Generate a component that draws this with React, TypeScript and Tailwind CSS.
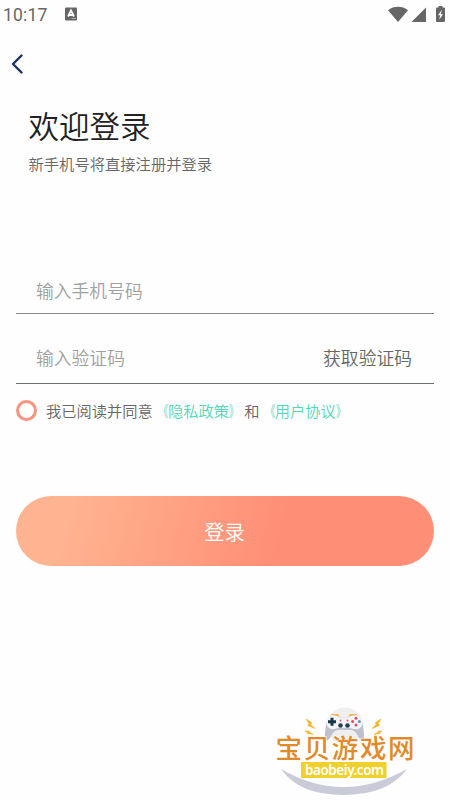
import React, { useState } from 'react';

const StatusBar: React.FC = () => (
  <div className="flex h-7 items-center justify-between pl-[3px] pr-1 text-[#666]">
    <div className="flex items-center gap-[17px]">
      <span className="w-[45px] pt-[2px] font-[Roboto] text-[17.5px] leading-6 tracking-[0.2px]">10:17</span>
      <svg width="13" height="14" viewBox="0 0 13 14">
        <rect width="12" height="13" y="0.5" rx="1" fill="#666" />
        <path d="M3 9.5 L6 3.5 L9 9.5 M4.2 8 H7.8" fill="none" stroke="#fff" strokeWidth="1.8" />
        <path d="M6.5 11.5 H11" stroke="#aaa" />
      </svg>
    </div>
    <svg width="58" height="18" viewBox="0 0 58 18" fill="#666">
      <path d="M0 5.2 C5.5 0.7 14.5 0.7 20 5.2 L10 17 Z" />
      <path d="M38 2.5 V17 H23.5 Z" />
      <path d="M50.5 1 H54.5 V2.5 H56 Q57 2.5 57 3.5 V16 Q57 17 56 17 H49 Q48 17 48 16 V3.5 Q48 2.5 49 2.5 H50.5 Z" />
      <path d="M53.8 4.8 L50 10.3 H52.2 L51.2 14.8 L55 9.2 H52.8 Z" fill="#fff" />
    </svg>
  </div>
);

const DocLink: React.FC<{ title: string }> = ({ title }) => (
  <a href="#" className="text-[#50d8b8]">
    <span className="inline-block origin-right scale-x-[0.62]">《</span>
    {title}
    <span className="inline-block origin-left scale-x-[0.62]">》</span>
  </a>
);

const SiteLogo: React.FC = () => (
  <svg width="150" height="96" viewBox="270 704 150 96">
    <circle cx="345" cy="726" r="18.5" fill="#efefef" />
    <path d="M281 769 Q343 805 407 769 Q388 795 343 795 Q299 795 281 769 Z" fill="#c9cbd9" />
    {/* gamepad */}
    <path d="M330 716.5 L332 714 H338 L340 716.5 Z M348 716.5 L350 714 H356 L358 716.5 Z" fill="#efb544" />
    <path
      d="M331 715.5 C334 714.8 338 716 340 717.5 H348 C350 716 354 714.8 358 715.5 C362 717 364.5 729 364 739 C363 742 360.5 740.5 358 736 C356 732 354 730.5 351 730 H338 C335 730.5 333 732 331 736 C329 740.5 326 742 325 739 C324.5 729 327 717 331 715.5 Z"
      fill="#bfc1cf"
    />
    <path
      d="M331 715.5 C334 714.8 338 716 340 717.5 H348 C350 716 354 714.8 358 715.5 C364 718 364 727.5 358 729 C355 730 352 728 350 728 H338 C336 728 334 730 331 729 C325 727.5 325 718 331 715.5 Z"
      fill="#f3f3f8"
    />
    <path d="M332 717.7 V725.7 M328 721.7 H336" stroke="#18384a" strokeWidth="3" />
    <circle cx="340.5" cy="725.5" r="2.3" fill="#244052" />
    <circle cx="347.5" cy="725.5" r="2.3" fill="#244052" />
    <circle cx="340.5" cy="720.5" r="1" fill="#d95c6b" />
    <circle cx="347.5" cy="720.5" r="1" fill="#d95c6b" />
    <circle cx="356" cy="718.3" r="1.5" fill="#dd4f60" />
    <circle cx="356" cy="725" r="1.5" fill="#dd4f60" />
    <circle cx="352.6" cy="721.6" r="1.5" fill="#dd4f60" />
    <circle cx="359.4" cy="721.6" r="1.5" fill="#4d9db0" />
    {/* sparks */}
    <g fill="#f1b62c" stroke="#f1b62c" strokeWidth="0.7">
      <path d="M306 719 L311.5 722.5 L310.8 724.5 L315 728.5 L307.8 725.5 L309 723.5 Z" />
      <path d="M305 731 L309.5 731.3 L309.8 732.5 L313 734.3 L307.5 733.6 L307.8 732.8 Z" />
      <path d="M381 719 L375.5 722.5 L376.2 724.5 L372 728.5 L379.5 725.5 L378.2 723.5 Z" />
      <path d="M382 731 L378 731.3 L377.8 732.5 L374 734.3 L380 733.6 L379.5 732.8 Z" />
    </g>
    <text
      x="275.5"
      y="758.3"
      textLength="139"
      fill="#e18a29"
      className="font-['Noto_Sans_CJK_SC',sans-serif] text-[26.5px] font-medium"
      stroke="#fff"
      strokeWidth="1"
      paintOrder="stroke"
    >
      宝贝游戏网
    </text>
    <rect x="301" y="762" width="85.5" height="16" fill="#efd02d" />
    <text x="305" y="774.5" textLength="79" fill="#fff" className="font-['Noto_Sans',sans-serif] text-[13.5px] font-semibold">
      baobeiy.com
    </text>
  </svg>
);

const App: React.FC = () => {
  const [agreed, setAgreed] = useState(false);

  return (
    <div className="flex h-[800px] w-[450px] flex-col overflow-hidden bg-[#fefefe] font-['Noto_Sans_CJK_SC',sans-serif]">
      <StatusBar />
      <header className="flex h-[72px] items-center pl-[11px]">
        <button type="button" aria-label="返回">
          <svg width="13" height="20" viewBox="0 0 13 20" fill="none" stroke="#153462" strokeWidth="2.4" strokeLinecap="round" strokeLinejoin="round">
            <path d="M10.5 1.5 L2 10 L10.5 18.5" />
          </svg>
        </button>
      </header>

      <div className="h-[160px] pl-[28.5px] pt-1">
        <h1 className="text-[30.5px] font-[350] leading-[42px] text-[#222]">欢迎登录</h1>
        <p className="mt-[6px] text-[15.3px] font-[350] leading-[22px] text-[#666]">新手机号将直接注册并登录</p>
      </div>

      <form className="flex flex-col pl-[15.5px] pr-[16.5px]" onSubmit={e => e.preventDefault()}>
        <div className="flex h-[54px] items-center border-b border-[#85858a] pl-[20.5px] pt-[6px]">
          <input
            className="w-full bg-transparent text-[17.8px] font-[350] leading-7 outline-none placeholder:text-[#a0a0a0]"
            placeholder="输入手机号码"
          />
        </div>
        <div className="flex h-[70px] items-center justify-between border-b border-[#6a706f] pl-[20.5px] pr-[21.5px] pt-[17px]">
          <input
            className="w-[200px] bg-transparent text-[17.8px] font-[350] leading-7 outline-none placeholder:text-[#a0a0a0]"
            placeholder="输入验证码"
          />
          <button type="button" className="whitespace-nowrap text-[17.8px] font-[350] leading-7 text-[#666]">获取验证码</button>
        </div>

        <div className="flex h-[54px] items-center text-[15.25px] font-[350] text-[#666]">
          <button
            type="button"
            aria-label="同意协议"
            onClick={() => setAgreed(v => !v)}
            className={`-mt-px mr-[9.5px] size-[21px] shrink-0 rounded-full border-3 border-[#fc947f] ${agreed ? 'bg-[#fc947f]' : ''}`}
          ></button>
          <div className="-mt-0.5 flex">
            <span>我已阅读并同意</span>
            <DocLink title="隐私政策" />
            <span>和</span>
            <DocLink title="用户协议" />
          </div>
        </div>

        <button
          type="submit"
          className="mt-[58px] h-[70px] w-[418px] rounded-full bg-[linear-gradient(105deg,#ffb491_12%,#ff8e76_63%)] text-[20.3px] font-[350] text-white"
        >
          登录
        </button>
      </form>

      <footer className="mt-auto flex justify-end pr-[30px]">
        <SiteLogo />
      </footer>
    </div>
  );
};

export default App;
